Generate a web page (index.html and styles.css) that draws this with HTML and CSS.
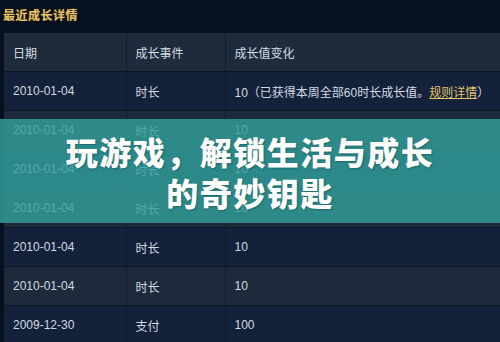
FILE: index.html
```html
<!DOCTYPE html>
<html lang="zh">
<head>
<meta charset="utf-8">
<link rel="stylesheet" href="styles.css">
</head>
<body>
<div class="page">
  <div class="title">最近成长详情</div>
  <table class="grid">
    <colgroup><col class="c1"><col class="c2"><col class="c3"></colgroup>
    <thead>
      <tr><th>日期</th><th>成长事件</th><th>成长值变化</th></tr>
    </thead>
    <tbody>
      <tr><td>2010-01-04</td><td>时长</td><td>10（已获得本周全部60时长成长值。<a class="rule">规则详情</a>）</td></tr>
      <tr><td>2010-01-04</td><td>时长</td><td>10</td></tr>
      <tr><td>2010-01-04</td><td>时长</td><td>10</td></tr>
      <tr><td>2010-01-04</td><td>时长</td><td>10</td></tr>
      <tr><td>2010-01-04</td><td>时长</td><td>10</td></tr>
      <tr><td>2010-01-04</td><td>时长</td><td>10</td></tr>
      <tr><td>2009-12-30</td><td>支付</td><td>100</td></tr>
    </tbody>
  </table>
  <div class="banner">
    <div class="headline">玩游戏，解锁生活与成长<br>的奇妙钥匙</div>
  </div>
</div>
</body>
</html>
```

FILE: styles.css
```css
html, body {
  margin: 0;
  padding: 0;
  background: #06101e;
  overflow: hidden;
}
.page {
  position: relative;
  width: 500px;
  height: 342px;
  overflow: hidden;
  font-family: "Liberation Sans", "Noto Sans CJK SC", sans-serif;
}
.title {
  height: 33px;
  box-sizing: border-box;
  padding: 7px 0 0 3px;
  font-family: "Noto Sans CJK SC", sans-serif;
  font-weight: 700;
  font-size: 12px;
  line-height: 16px;
  letter-spacing: 0.5px;
  color: #e9c66e;
  text-shadow: 0 0 2px rgba(120, 80, 0, 0.6);
}
.grid {
  margin-left: 4px;
  width: 520px;
  border-collapse: collapse;
  table-layout: fixed;
  font-size: 12px;
  color: #d3dae2;
}
.c1 { width: 122px; }
.c2 { width: 99px; }
.c3 { width: 299px; }
.grid th, .grid td {
  height: 38px;
  padding: 0 0 0 9px;
  text-align: left;
  font-weight: 400;
  white-space: nowrap;
  border-bottom: 1px solid #0b1727;
  border-right: 1px solid #0f1c2c;
  vertical-align: middle;
}
.grid th {
  background: #1e2b3a;
  color: #d6dde4;
}
.grid tbody tr:nth-child(odd) td { background: #13213a; }
.grid tbody tr:nth-child(even) td { background: #1c2a3b; }
.grid td:nth-child(3), .grid th:nth-child(3) { padding-left: 9px; }
.rule {
  color: #e3c36a;
  text-decoration: underline;
}
.banner {
  position: absolute;
  left: 0;
  top: 119px;
  width: 500px;
  height: 104px;
  background: rgba(50, 160, 155, 0.82);
  display: flex;
  align-items: center;
  justify-content: center;
}
.headline {
  font-family: "Noto Sans CJK SC", sans-serif;
  font-weight: 900;
  font-size: 32px;
  line-height: 41px;
  letter-spacing: 1.5px;
  color: #ffffff;
  text-align: center;
  text-shadow: 1px 1px 2px rgba(0, 40, 40, 0.35);
  margin-top: 2px;
}
```
